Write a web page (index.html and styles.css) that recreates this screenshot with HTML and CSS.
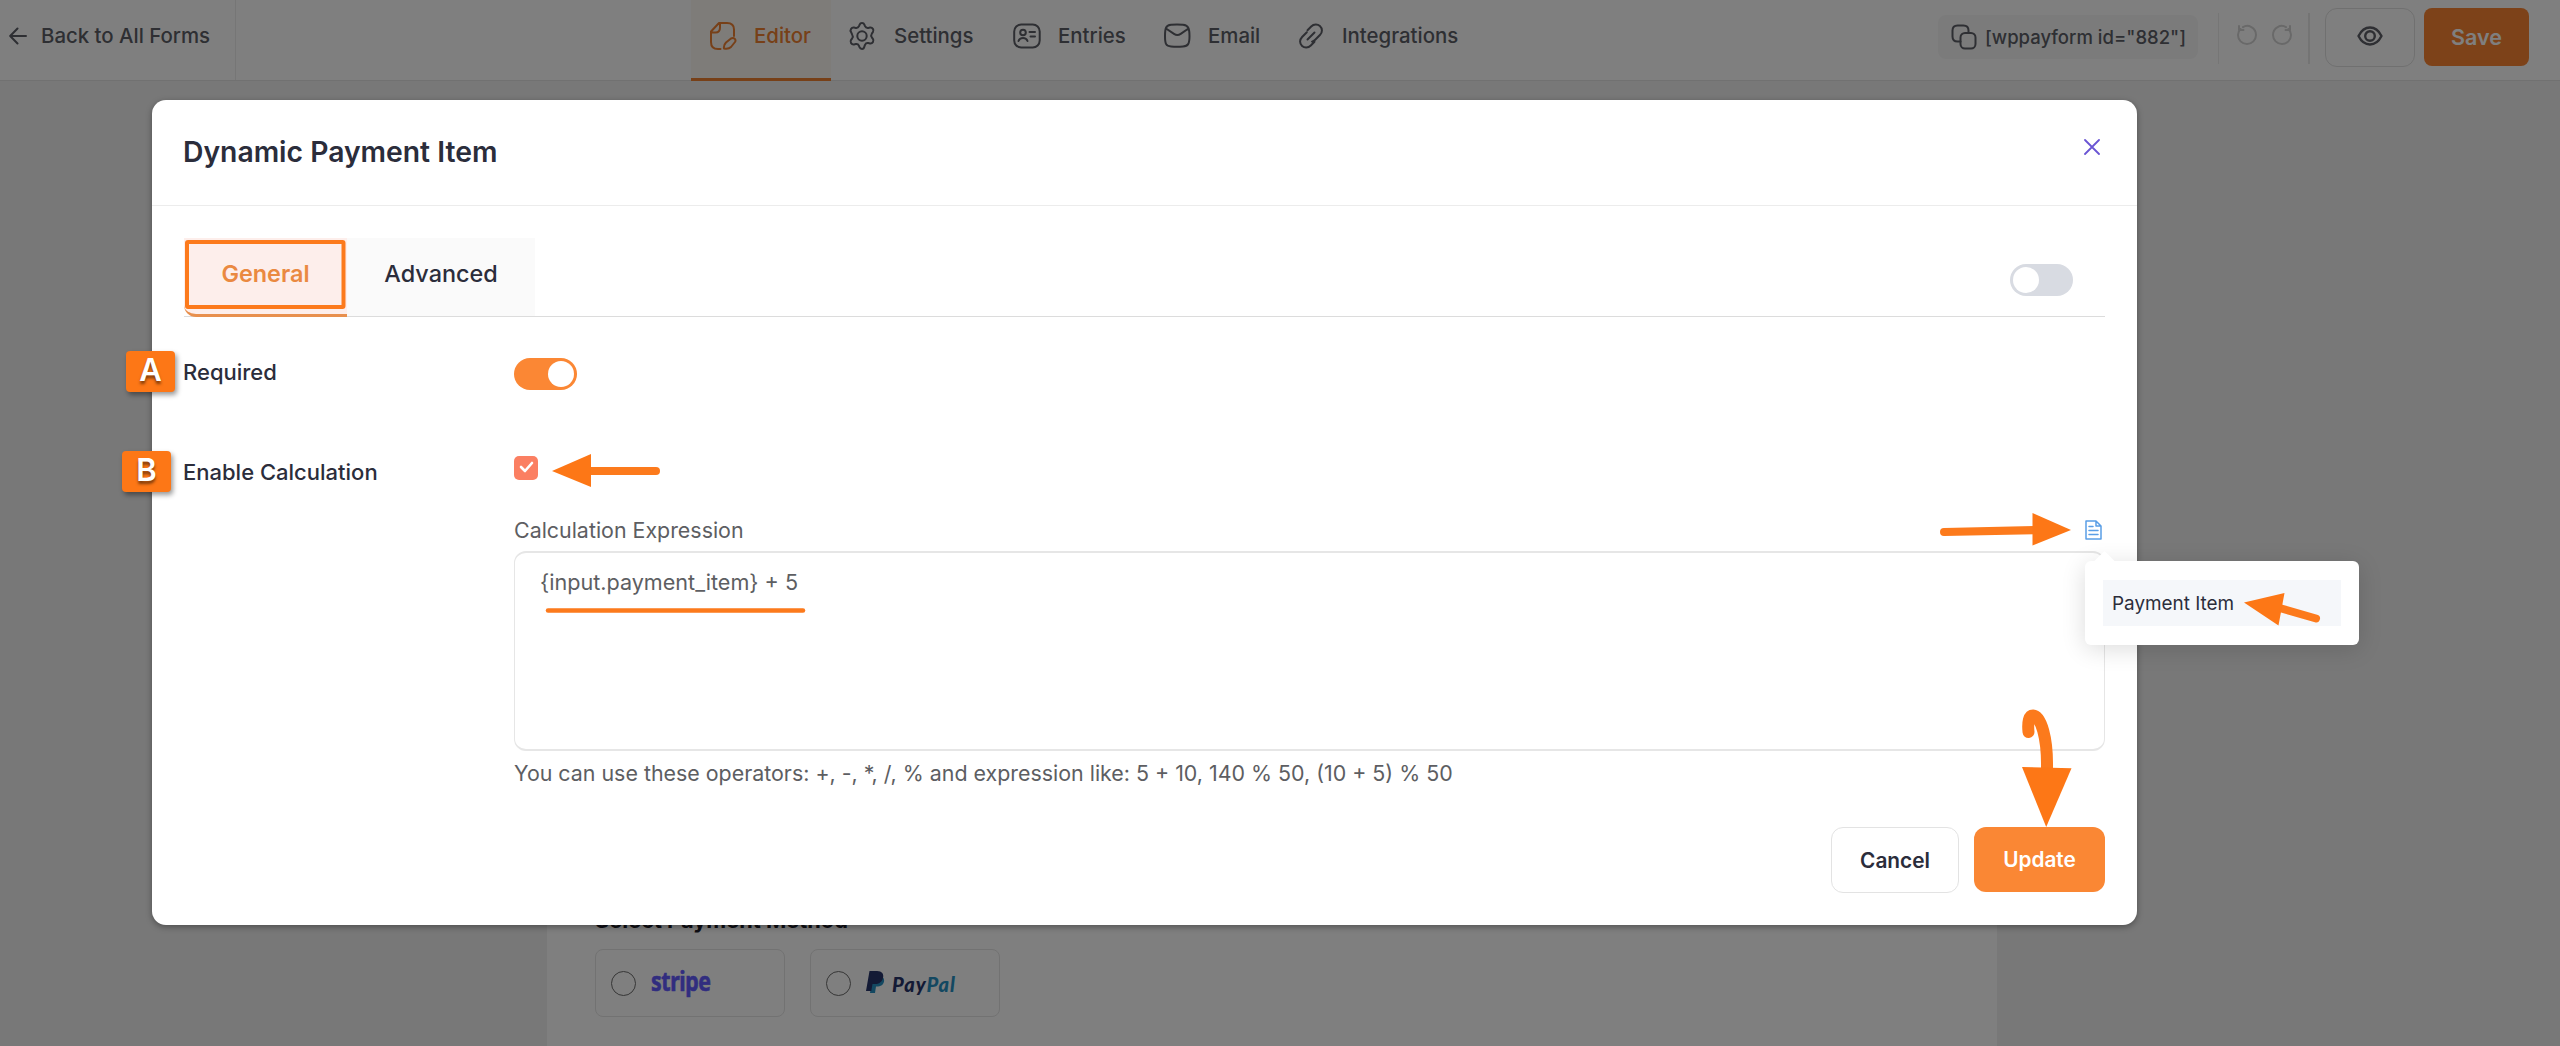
FILE: index.html
```html
<!DOCTYPE html>
<html lang="en">
<head>
<meta charset="utf-8">
<title>Form Editor</title>
<link rel="stylesheet" href="styles.css">
</head>
<body>
<div class="page">
  <header class="topbar">
    <a class="back">
      <svg class="back-icon" viewBox="0 0 18 18"><path d="M17 9H1.5M8.5 1.5L1.2 9l7.300 7.500"/></svg>
      <span>Back to All Forms</span>
    </a>
    <nav class="nav">
      <a class="nav-item nav-editor">
        <svg class="icon" viewBox="0 0 28 28"><path d="M25 14V7.500C25 3 22.500 1 18 1H10L2 9.500V20c0 4.500 2.500 7 7 7h2.500M11 1v4.500c0 3-1.500 5-4.500 5H2M15 26.500c-.5-3 .5-4.500 2-6l5-4c3-1.500 5.500 1 4 3.500l-4 5c-1.500 1.500-4 2-7 1.500z"/></svg>
        <span>Editor</span>
      </a>
      <a class="nav-item nav-settings">
        <svg class="icon" viewBox="0 0 28 28"><path d="M11.500 2.800C12 1.500 12.800 1 14 1s2 .5 2.500 1.800l.5 1.400c.6 1.300 1.800 1.900 3.200 1.700l1.800-.3c1.300-.2 2.200.2 2.900 1.300.8 1.200.8 2.200 0 3.300l-1.100 1.500c-.9 1.300-.9 2.300 0 3.600l1.100 1.500c.8 1.100.8 2.100 0 3.300-.7 1.100-1.600 1.500-2.900 1.300l-1.800-.3c-1.400-.2-2.600.4-3.200 1.700l-.5 1.400C16 26.500 15.200 27 14 27s-2-.5-2.500-1.800l-.5-1.400c-.6-1.300-1.800-1.900-3.200-1.700l-1.800.3c-1.300.2-2.200-.2-2.900-1.300-.8-1.200-.8-2.200 0-3.300l1.100-1.500c.9-1.300.9-2.300 0-3.600L3.100 10.200c-.8-1.100-.8-2.100 0-3.300C3.800 5.800 4.700 5.400 6 5.600l1.800.3c1.400.2 2.600-.4 3.200-1.700z"/><circle cx="14" cy="14" r="4.700"/></svg>
        <span>Settings</span>
      </a>
      <a class="nav-item nav-entries">
        <svg class="icon" viewBox="0 0 28 28"><rect x="1.200" y="2.500" width="25.500" height="23" rx="7"/><circle cx="10" cy="10.500" r="2.800"/><path d="M5.500 19c1.500-4 7.500-4 9 0M16.500 10H22M17.500 14.500H22"/></svg>
        <span>Entries</span>
      </a>
      <a class="nav-item nav-email">
        <svg class="icon" viewBox="0 0 28 28"><path d="M2 14c0-8 1-11 6-11.300 4-.3 8-.3 12 0 5 .3 6.500 3.300 6.500 11.300S25 24.200 20 24.500c-4 .3-8 .3-12 0-5-.3-6-2.500-6-10.500zM3 6.500l8 5.300c2.200 1.500 4.500 1.500 6.700 0L25.500 6.500"/></svg>
        <span>Email</span>
      </a>
      <a class="nav-item nav-integrations">
        <svg class="icon" viewBox="0 0 28 28"><path d="M10.500 8.200l3.700-3.700c2.700-2.700 6.500-2.500 8.700-.5 2.700 2.500 2.700 6.200 0 9l-4.700 4.700c-1 1-2 1.600-3.200 1.900M17.500 19.800l-3.700 3.700c-2.700 2.700-6.500 2.500-8.700.5-2.700-2.500-2.700-6.200 0-9l4.700-4.700M10.500 17.500l7-7"/></svg>
        <span>Integrations</span>
      </a>
    </nav>
    <div class="tools">
      <div class="shortcode">
        <svg class="copy-icon" viewBox="0 0 26 26"><path d="M9.500 17.500H6.500c-3.500 0-5-1.500-5-5V6.500c0-3.500 1.500-5 5-5h6c3.500 0 5 1.500 5 5v2.500"/><rect x="9.500" y="9" width="15" height="15.500" rx="4.500"/></svg>
        <span>[wppayform id="882"]</span>
      </div>
      <div class="history">
        <svg class="hist-icon" viewBox="0 0 22 22"><path d="M7 3.200C12-.2 20 3.500 20 11a9 9 0 0 1-18 0c0-2.500 1-4.500 2.500-6M3 2v4h4.500"/></svg>
        <svg class="hist-icon" viewBox="0 0 22 22"><path d="M15 3.200C10-.2 2 3.500 2 11a9 9 0 0 0 18 0c0-2.500-1-4.500-2.500-6M19 2v4h-4.500"/></svg>
      </div>
      <div class="preview">
        <svg class="eye-icon" viewBox="0 0 26 20"><path d="M1.500 10C4 5 8 1.500 13 1.500S22 5 24.500 10C22 15 18 18.500 13 18.500S4 15 1.500 10z"/><circle cx="13" cy="10" r="4.800"/></svg>
      </div>
      <div class="save"><span>Save</span></div>
    </div>
  </header>
  <main class="canvas">
    <section class="form-card">
      <h3 class="pay-title">Select Payment Method</h3>
      <div class="methods">
        <div class="method"><i class="radio"></i><span class="stripe">stripe</span></div>
        <div class="method"><i class="radio"></i>
          <svg class="pp-icon" viewBox="0 0 19 23"><path fill="#2790c3" d="M16.500 6c3 2 2 9-4.500 9.500H10L9 22H4L6.500 6z"/><path fill="#27346a" d="M3.500 0H11c5 0 7 3 6 7s-4 6-8 6H6.500L5.300 20H0z"/></svg>
          <span class="paypal">Pay<b class="pal">Pal</b></span></div>
      </div>
    </section>
  </main>
</div>

<div class="backdrop">
  <div class="modal">
    <div class="modal-head">
      <h2 class="title">Dynamic Payment Item</h2>
      <svg class="close" viewBox="0 0 16 16"><path d="M1 1l14 14M15 1L1 15"/></svg>
    </div>
    <div class="modal-body">
      <div class="tabs">
        <div class="tab tab-general"><span>General</span></div>
        <div class="tab tab-advanced"><span>Advanced</span></div>
        <i class="switch off"></i>
      </div>
      <div class="row row-required">
        <label class="label">Required</label>
        <i class="switch on"></i>
      </div>
      <div class="row row-calc">
        <label class="label">Enable Calculation</label>
        <div class="check"><svg class="tick" viewBox="0 0 24 24"><path d="M7 11l4 4 7-8"/></svg></div>
      </div>
      <div class="calc">
        <div class="calc-head">
          <span>Calculation Expression</span>
          <svg class="doc" viewBox="0 0 17 20"><path d="M1 1h10l5 5v13H1zM11 1v5h5M4 6.500h4M4 10.500h9M4 14.500h9"/></svg>
        </div>
        <div class="area">{input.payment_item} + 5</div>
        <p class="help">You can use these operators: +, -, *, /, % and expression like: 5 + 10, 140 % 50, (10 + 5) % 50</p>
      </div>
      <div class="actions">
        <div class="btn cancel">Cancel</div>
        <div class="btn update">Update</div>
      </div>
    </div>
  </div>
  <div class="popover"><div class="option">Payment Item</div></div>
  <div class="badge badge-a">A</div>
  <div class="badge badge-b">B</div>
  <svg class="marks" viewBox="0 0 2560 1046">
    <rect class="line" x="187" y="242" width="156.500" height="65" rx="1" stroke-width="4"/>
    <path class="line" d="M585 471H656" stroke-width="8"/><path class="head" d="M552 471l39-17v33z"/>
    <path class="line" d="M548 610.500H803" stroke-width="4.500"/>
    <path class="line" d="M1944 532L2040 530" stroke-width="8"/><path class="head" d="M2071 530l-38.500-17v32.500z"/>
    <path class="line" d="M2276 607L2316 618.500" stroke-width="8"/><path class="head" d="M2244 602.500l40.500-9.500-6 32.500z"/>
    <path class="line" d="M2028.500 732C2027.500 722 2029 715.500 2033 715.500C2041 716 2047.500 738 2047 768" stroke-width="12"/><path class="head" d="M2022 767l49.500 1.200L2046.200 827z"/>
  </svg>
</div>
</body>
</html>
```
FILE: styles.css
```css
* { box-sizing: border-box; }
body {
  margin: 0;
  width: 2560px;
  height: 1046px;
  overflow: hidden;
  font-family: Inter, "Liberation Sans", sans-serif;
  font-size: 20px;
  color: #2b2d3b;
  position: relative;
}
h2, h3, p { margin: 0; }
svg { fill: none; stroke: currentColor; stroke-width: 2; stroke-linecap: round; stroke-linejoin: round; flex: none; display: block; }
.page { height: 1046px; background: #f0f0f0; display: flex; flex-direction: column; }

.topbar { height: 81px; background: #fff; border-bottom: 1px solid #e2e2e2; display: flex; flex: none; font-weight: 500; font-size: 20.400px; color: #5c5e66; }
.back { width: 236px; border-right: 1px solid #ececec; display: flex; align-items: center; gap: 14px; padding: 0 0 9px 9px; }
.back-icon { width: 18px; height: 18px; }
.nav { display: flex; margin-left: 455px; }
.nav-item { display: flex; align-items: center; gap: 17px; height: 81px; padding: 0 0 10px 0; }
.icon { width: 28px; height: 28px; }
.nav-editor { width: 140px; padding: 3px 0 10px 18px; border-bottom: 3px solid #ee8031; background: #fdf8f3; color: #ee8031; }
.nav-settings { margin-left: 17px; width: 165px; gap: 18px; }
.nav-entries { width: 150px; }
.nav-email { width: 134px; }
.tools { margin-left: auto; display: flex; align-items: flex-start; padding-right: 31px; }
.shortcode { display: flex; align-items: center; width: 260px; height: 44px; margin: 15px 20px 0 0; padding-left: 13px; gap: 8px; background: #f7f7f7; border-radius: 8px; white-space: nowrap; font-size: 18.500px; }
.copy-icon { width: 26px; height: 26px; }
.history { display: flex; gap: 13px; align-items: flex-start; width: 92px; height: 51px; margin: 13px 15px 0 0; padding: 11px 0 0 17px; border-left: 1px solid #ececec; border-right: 2px solid #e8e8e8; color: #d2d2d2; }
.hist-icon { width: 22px; height: 22px; }
.preview { width: 90px; height: 59px; margin: 8px 9px 0 0; border: 1px solid #e0e0e0; border-radius: 12px; display: flex; justify-content: center; padding-top: 17px; }
.eye-icon { width: 26px; height: 20px; stroke-width: 2.400; }
.save { width: 105px; height: 58px; margin-top: 8px; border-radius: 8px; background: #fa8532; color: #fff; font-size: 21.500px; font-weight: 600; display: flex; align-items: center; justify-content: center; }

.canvas { flex: 1; padding: 60px 0 0 547px; display: flex; }
.form-card { width: 1450px; background: #fff; padding: 760px 0 0 48px; }
.pay-title { font-size: 21.800px; line-height: 38px; font-weight: 700; color: #1c1c28; }
.methods { display: flex; gap: 25px; margin-top: 10px; }
.method { width: 190px; height: 68px; border: 1px solid #e4e4e4; border-radius: 8px; display: flex; align-items: center; padding-left: 15px; }
.radio { width: 25px; height: 25px; border: 1px solid #6c6c6c; border-radius: 50%; }
.stripe { margin: -5px 0 0 15px; font: 700 26px/30px "Noto Sans", sans-serif; color: #635bff; letter-spacing: -.5px; transform: scaleX(.82); transform-origin: left center; -webkit-text-stroke: .6px #635bff; }
.pp-icon { width: 19px; height: 23px; margin: -2px 0 0 15px; stroke: none; }
.paypal { margin: 1px 0 0 7px; font: italic 900 20px/24px Lato, sans-serif; color: #27346a; letter-spacing: 1px; }
.pal { font-weight: 900; color: #2790c3; }

.backdrop { position: absolute; inset: 0; background: rgba(0, 0, 0, .5); padding: 100px 0 0 152px; }
.modal { width: 1985px; height: 825px; background: #fff; border-radius: 14px; box-shadow: 0 2px 6px rgba(0, 0, 0, .35); }
.modal-head { height: 106px; border-bottom: 1px solid #ececec; display: flex; justify-content: space-between; align-items: flex-start; padding: 0 37px 0 31px; }
.title { font-size: 28.300px; line-height: 40px; font-weight: 600; margin-top: 32px; }
.close { width: 16px; height: 16px; margin-top: 39px; color: #6a55d4; stroke-width: 1.800; }
.modal-body { padding: 32px 32px 0; font-size: 22px; }
.tabs { display: flex; height: 79px; border-bottom: 1px solid #dcdcdc; font-size: 23.400px; }
.tab { display: flex; justify-content: center; line-height: 72px; }
.tab-general { width: 163px; height: 79px; background: #fdeeeb; color: #ea8941; font-weight: 600; border-bottom: 3px solid #e8904e; border-bottom-left-radius: 12px; }
.tab-advanced { width: 188px; background: #fafafa; font-weight: 500; }
.switch { width: 63px; height: 32px; border-radius: 16px; flex: none; display: flex; padding: 3px; }
.switch::before { content: ""; width: 26px; height: 26px; border-radius: 50%; background: #fff; }
.off { background: #d8dbe2; margin: 26px 32px 0 auto; }
.on { background: #fb8734; justify-content: flex-end; }
.row { display: flex; font-weight: 500; }
.label { width: 330px; line-height: 32px; text-indent: -1px; }
.row-required { margin-top: 39px; height: 100px; padding-top: 2px; }
.row-required .label { margin-top: -2px; }
.check { width: 24px; height: 24px; border-radius: 5px; background: #fb7f62; }
.row-calc { height: 58px; }
.tick { width: 24px; height: 24px; color: #fff; stroke-width: 2.600; }
.calc { margin-left: 330px; color: #5d5e62; font-size: 21.400px; }
.calc-head { display: flex; justify-content: space-between; align-items: center; height: 37px; padding: 0 3px 6px 0; }
.doc { width: 17px; height: 20px; color: #5a9ee6; stroke-width: 1.500; }
.area { height: 200px; border: 2px solid #e6e6e6; border-width: 2px 1px; border-radius: 12px; padding: 13px 25px; line-height: 32px; font-size: 21.600px; }
.help { line-height: 32px; margin-top: 6px; }
.actions { display: flex; justify-content: flex-end; gap: 15px; margin-top: 38px; }
.btn { height: 66px; border-radius: 12px; display: flex; align-items: center; justify-content: center; font-weight: 600; font-size: 20.800px; }
.cancel { width: 128px; border: 1px solid #e3e3e3; }
.update { width: 131px; height: 65px; background: #fa8734; color: #fff; }

.popover { position: absolute; left: 2085px; top: 561px; width: 274px; height: 84px; background: #fff; border-radius: 6px; padding: 19px 18px; box-shadow: 0 4px 24px rgba(0, 0, 0, .14); }
.popover::before { content: ""; position: absolute; left: 12px; top: -7px; width: 15px; height: 15px; background: #fff; transform: rotate(45deg); }
.option { position: relative; height: 46px; background: #f5f7fa; padding-left: 9px; line-height: 47px; font-size: 18.900px; }
.badge { position: absolute; width: 49px; height: 41px; border-radius: 4px; background: #fd7716; color: #fff; font-size: 31px; line-height: 38px; font-weight: 600; text-align: center; text-shadow: 0 3px 3px rgba(0, 0, 0, .5); box-shadow: 2px 3px 5px rgba(0, 0, 0, .4); }
.badge-a { left: 126px; top: 351px; }
.badge-b { left: 122px; top: 451px; }
.marks { position: absolute; left: 0; top: 0; width: 2560px; height: 1046px; }
.line { stroke: #fc7a1c; }
.head { fill: #fd7716; stroke: none; }
```
